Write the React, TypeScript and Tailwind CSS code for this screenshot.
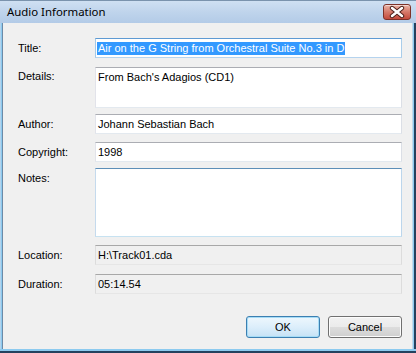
import React from "react";

const normalBox =
  "border-t border-t-[#abadb3] border-l border-l-[#e2e3ea] border-r border-r-[#dbdfe6] border-b border-b-[#e3e9ef] bg-white";

function Row({
  label,
  children,
  mt,
  labelLead = "leading-[20px]",
}: {
  label: string;
  children: React.ReactNode;
  mt: string;
  labelLead?: string;
}) {
  return (
    <div className={`flex items-start ${mt}`}>
      <div className={`w-[77px] shrink-0 ${labelLead}`}>{label}</div>
      <div className="w-[307px] shrink-0">{children}</div>
    </div>
  );
}

export default function App() {
  return (
    <div className="w-[416px] h-[353px] overflow-hidden flex flex-col bg-[#b9d1ea] font-['Liberation_Sans',Arial,sans-serif] text-[11px] text-black">
      {/* Title bar */}
      <div className="h-[23px] shrink-0 flex items-start border-t border-t-[#7a93ad] bg-gradient-to-b from-[#cfe0f2] via-[#bfd4ec] to-[#b3cbe7]">
        <div className="pl-[7px] pt-[3px] font-['Noto_Sans',sans-serif] text-[11.4px] leading-[16px] text-black">
          Audio Information
        </div>
        <div className="ml-auto mr-[5px] mt-[3px] w-[28px] h-[16px] rounded-[3px] border border-[#7d3229] bg-gradient-to-b from-[#eab3a6] via-[#d5796a] to-[#c44a3c] flex items-center justify-center shadow-[inset_0_1px_0_rgba(255,255,255,0.5)]">
          <svg width="26" height="14" viewBox="0 0 26 14">
            <path d="M8 3 L18 11 M18 3 L8 11" stroke="#4a1e18" strokeWidth="4.4" strokeLinecap="round" fill="none" />
            <path d="M8 3 L18 11 M18 3 L8 11" stroke="#ffffff" strokeWidth="2.5" strokeLinecap="round" fill="none" />
          </svg>
        </div>
      </div>

      {/* Body with frame */}
      <div className="flex h-[326px] shrink-0">
        <div className="w-[1px] bg-[#b4d3ec]" />
        <div className="w-[1px] bg-[#8ccaef]" />
        <div className="w-[410px] border-l border-l-[#6d8aa7] bg-[#f0f0f0] flex flex-col pl-[15px] pr-[10px]">
          <Row label="Title:" mt="mt-[15px]">
            <div className="h-[20px] border-t border-t-[#5e9ad3] border-l border-l-[#a4c9e8] border-r border-r-[#a9cdea] border-b border-b-[#b5d3ee] bg-white flex items-center pl-[1px]">
              <span className="bg-[#3399ff] text-white px-[1px] leading-[13px] whitespace-nowrap">
                Air on the G String from Orchestral Suite No.3 in D
              </span>
            </div>
          </Row>
          <Row label="Details:" mt="mt-[9px]" labelLead="leading-[18px]">
            <div className={`h-[41px] ${normalBox} pl-[2px] pt-[1px] leading-[16px]`}>
              From Bach's Adagios (CD1)
            </div>
          </Row>
          <Row label="Author:" mt="mt-[6px]">
            <div className={`h-[20px] ${normalBox} flex items-center pl-[2px]`}>Johann Sebastian Bach</div>
          </Row>
          <Row label="Copyright:" mt="mt-[8px]">
            <div className={`h-[20px] ${normalBox} flex items-center pl-[2px]`}>1998</div>
          </Row>
          <Row label="Notes:" mt="mt-[6px]">
            <div className="h-[69px] border-t border-t-[#5d8fb8] border-l border-l-[#c5daed] border-r border-r-[#bcd6ec] border-b border-b-[#c7e2f1] bg-white" />
          </Row>
          <Row label="Location:" mt="mt-[8px]">
            <div className="h-[20px] border-t border-t-[#a8a8a8] border-l border-l-[#dcdcdc] border-r border-r-[#dcdcdc] border-b border-b-[#e6e6e6] bg-[#f0f0f0] flex items-center pl-[2px]">
              {"H:\\Track01.cda"}
            </div>
          </Row>
          <Row label="Duration:" mt="mt-[9px]">
            <div className="h-[20px] border-t border-t-[#a8a8a8] border-l border-l-[#dcdcdc] border-r border-r-[#dcdcdc] border-b border-b-[#e6e6e6] bg-[#f0f0f0] flex items-center pl-[2px]">
              05:14.54
            </div>
          </Row>
          <div className="mt-[22px] flex justify-end gap-[8px]">
            <div className="w-[74px] h-[22px] rounded-[3px] border border-[#3c7fb1] bg-gradient-to-b from-[#eef7fd] via-[#dceefb] to-[#c6e2f5] shadow-[inset_0_0_0_1px_#a6dcf6] flex items-center justify-center">
              OK
            </div>
            <div className="w-[74px] h-[22px] rounded-[3px] border border-[#707070] bg-[linear-gradient(to_bottom,#f2f2f2_0%,#ebebeb_50%,#dddddd_50%,#cfcfcf_100%)] shadow-[inset_0_0_0_1px_#fcfcfc] flex items-center justify-center">
              Cancel
            </div>
          </div>
        </div>
        <div className="w-[1px] bg-[#c4d9ec]" />
        <div className="w-[1px] bg-[#8ccaef]" />
        <div className="w-[2px] bg-[#24415e]" />
      </div>
      <div className="h-[2px] shrink-0 bg-[#8ccaef]" />
      <div className="h-[2px] shrink-0 bg-[#24415e]" />
    </div>
  );
}
